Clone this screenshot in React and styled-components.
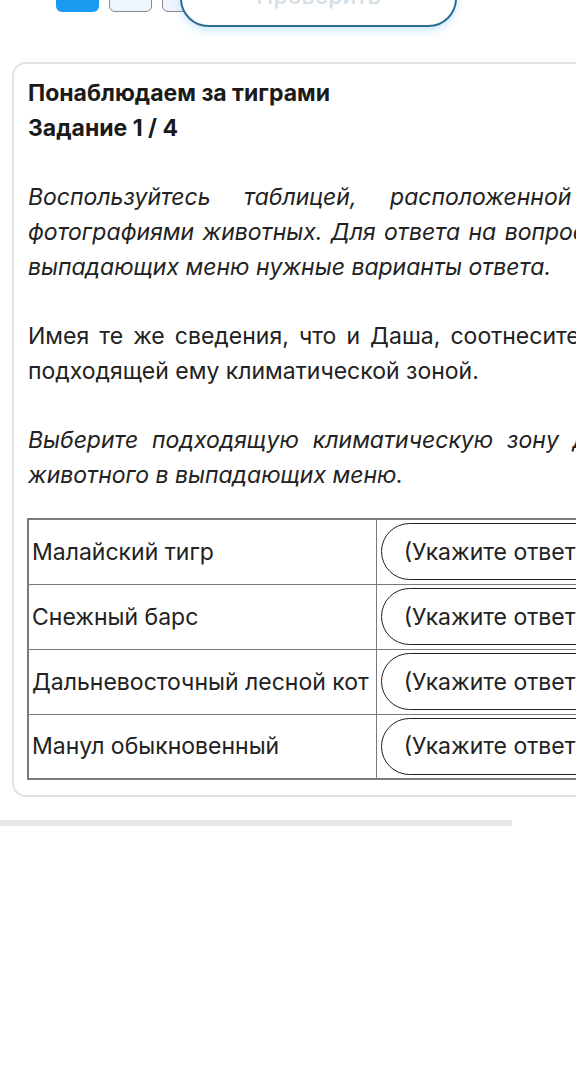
import styled, { createGlobalStyle } from "styled-components";

const GlobalStyle = createGlobalStyle`
  html, body {
    margin: 0;
    padding: 0;
    overflow: hidden;
    background: #ffffff;
    font-family: Inter, "Noto Sans", sans-serif;
    color: #1f1f1f;
  }
`;

const rows = [
  "Малайский тигр",
  "Снежный барс",
  "Дальневосточный лесной кот",
  "Манул обыкновенный",
];

const App = () => {
  return (
    <Page>
      <GlobalStyle />
      <TopBar>
        <Square $active />
        <Square />
        <Square />
        <CheckButton>Проверить</CheckButton>
      </TopBar>

      <Card>
        <Heading>
          Понаблюдаем за тиграми
          <br />
          Задание 1 / 4
        </Heading>

        <Text $italic>
          Воспользуйтесь таблицей, расположенной рядом с фотографиями животных. Для ответа на
          вопрос выберите в выпадающих меню нужные варианты ответа.
        </Text>
        <Text>
          Имея те же сведения, что и Даша, соотнесите животное с подходящей ему климатической
          зоной.
        </Text>
        <Text $italic>
          Выберите подходящую климатическую зону для каждого животного в выпадающих меню.
        </Text>

        <Table>
          <tbody>
            {rows.map((name) => (
              <tr key={name}>
                <NameCell>{name}</NameCell>
                <SelectCell>
                  <Select>(Укажите ответ)</Select>
                </SelectCell>
              </tr>
            ))}
          </tbody>
        </Table>
      </Card>

      <Divider />
    </Page>
  );
};

const Page = styled.div`
  width: 100vw;
  overflow: hidden;
`;

const TopBar = styled.div`
  position: relative;
  display: flex;
  align-items: flex-start;
  gap: 10px;
  height: 56px;
  margin-top: -30px;
  padding-left: 56px;
`;

const Square = styled.div`
  width: 43px;
  height: 42px;
  box-sizing: border-box;
  border-radius: 6px;
  background: ${(p) => (p.$active ? "#1a9af0" : "#eef5fc")};
  border: ${(p) => (p.$active ? "none" : "1.5px solid #8a8a8a")};
`;

const CheckButton = styled.div`
  position: absolute;
  left: 180px;
  top: 0;
  width: 277px;
  height: 57px;
  box-sizing: border-box;
  display: flex;
  align-items: flex-end;
  justify-content: center;
  padding-bottom: 17px;
  border: 2px solid #2c6d8f;
  border-radius: 30px;
  background: #ffffff;
  box-shadow: 0 4px 8px rgba(30, 160, 240, 0.22);
  color: #d3dee6;
  font-size: 23px;
  line-height: 1;
  font-weight: 500;
`;

const Card = styled.div`
  width: 696px;
  margin: 36px 0 0 12px;
  padding: 12px 14px 15px;
  border: 2px solid #e3e3e3;
  border-radius: 14px;
`;

const Heading = styled.h2`
  margin: 0;
  font-size: 23px;
  line-height: 35px;
  font-weight: 700;
  color: #1a1a1a;
`;

const Text = styled.p`
  margin: 34px 0 0;
  font-size: 23px;
  line-height: 35px;
  text-align: justify;
  font-style: ${(p) => (p.$italic ? "italic" : "normal")};
  color: #222222;
`;

const Table = styled.table`
  margin-top: 25px;
  margin-left: -1px;
  border-collapse: collapse;
  border: 2px solid #7a7a7a;
`;

const NameCell = styled.td`
  height: 65px;
  box-sizing: border-box;
  padding: 0 7px 0 3px;
  border: 1.5px solid #7a7a7a;
  font-size: 23px;
  color: #222222;
  white-space: nowrap;
`;

const SelectCell = styled.td`
  padding: 3px 4px;
  border: 1.5px solid #7a7a7a;
`;

const Select = styled.div`
  width: 320px;
  height: 57px;
  box-sizing: border-box;
  display: flex;
  align-items: center;
  padding-left: 22px;
  border: 1.5px solid #222222;
  border-radius: 29px;
  font-size: 23px;
  color: #222222;
  white-space: nowrap;
`;

const Divider = styled.div`
  width: 512px;
  height: 6px;
  margin-top: 23px;
  background: #e6e7ea;
`;

export default App;
